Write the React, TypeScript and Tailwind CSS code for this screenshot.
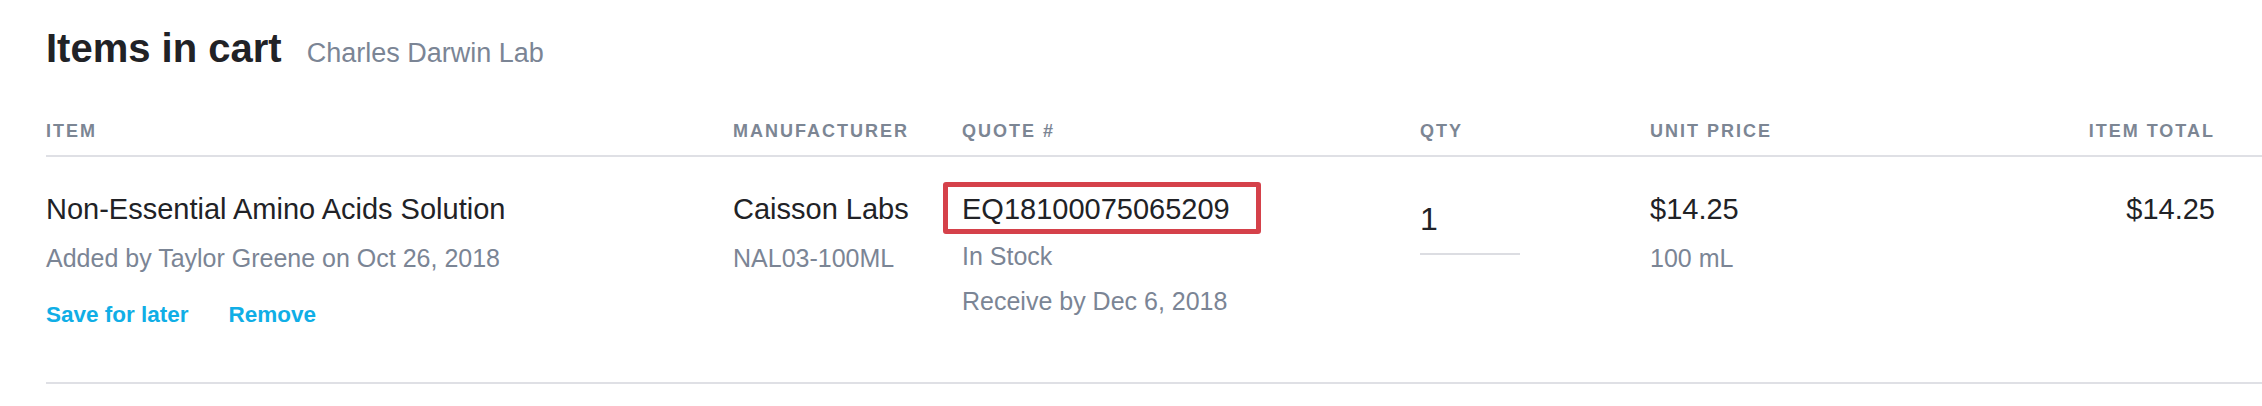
const font = { fontFamily: '"Liberation Sans", Arial, sans-serif' };

function HeaderCell({ children, right }: { children: React.ReactNode; right?: boolean }) {
  return (
    <div
      className={`pb-[15px] text-[18px] leading-[18px] font-bold tracking-[2px] text-[#7c8694] uppercase ${
        right ? 'text-right' : ''
      }`}
    >
      {children}
    </div>
  );
}

export default function App() {
  return (
    <main className="min-h-screen bg-white pt-[28px] pl-[46px] text-[#212226]" style={font}>
      <div className="flex items-baseline gap-[25px]">
        <h1 className="text-[40px] leading-[40px] font-bold">Items in cart</h1>
        <span className="text-[27px] leading-[27px] text-[#7b8595]">Charles Darwin Lab</span>
      </div>

      <div className="mt-[54px]">
        {/* header */}
        <div className="grid grid-cols-[687px_229px_458px_230px_1fr_auto] border-b-2 border-[#dfe0e5] pr-[47px]">
          <HeaderCell>Item</HeaderCell>
          <HeaderCell>Manufacturer</HeaderCell>
          <HeaderCell>Quote #</HeaderCell>
          <HeaderCell>Qty</HeaderCell>
          <HeaderCell>Unit Price</HeaderCell>
          <HeaderCell right>Item Total</HeaderCell>
        </div>

        {/* row */}
        <div className="grid grid-cols-[687px_229px_458px_230px_1fr_auto] border-b-2 border-[#dfe0e5] pt-[38px] pr-[47px] pb-[56px]">
          <div>
            <div className="text-[29px] leading-[29px]">Non-Essential Amino Acids Solution</div>
            <div className="mt-[22px] text-[25px] leading-[25px] text-[#7b8595]">
              Added by Taylor Greene on Oct 26, 2018
            </div>
            <div className="mt-[33px] flex gap-[40px] text-[22.5px] leading-[22px] font-bold text-[#10aee6]">
              <button type="button">Save for later</button>
              <button type="button">Remove</button>
            </div>
          </div>

          <div>
            <div className="text-[29px] leading-[29px]">Caisson Labs</div>
            <div className="mt-[22px] text-[25px] leading-[25px] text-[#7b8595]">NAL03-100ML</div>
          </div>

          <div>
            <div className="relative inline-block text-[29px] leading-[29px]">
              EQ18100075065209
              <span className="absolute -top-[13px] -left-[19px] h-[52px] w-[318px] rounded-[3px] border-[5px] border-[#d5414a]" />
            </div>
            <div className="mt-[18px] text-[25px] leading-[25px] text-[#7b8595]">In Stock</div>
            <div className="mt-[20px] text-[25px] leading-[25px] text-[#7b8595]">Receive by Dec 6, 2018</div>
          </div>

          <div>
            <div className="mt-[8px] w-[100px] border-b-2 border-[#dcdde2] pb-[18px] text-[32px] leading-[32px]">1</div>
          </div>

          <div>
            <div className="text-[29px] leading-[29px]">$14.25</div>
            <div className="mt-[22px] text-[25px] leading-[25px] text-[#7b8595]">100 mL</div>
          </div>

          <div className="text-right text-[29px] leading-[29px]">$14.25</div>
        </div>
      </div>
    </main>
  );
}
